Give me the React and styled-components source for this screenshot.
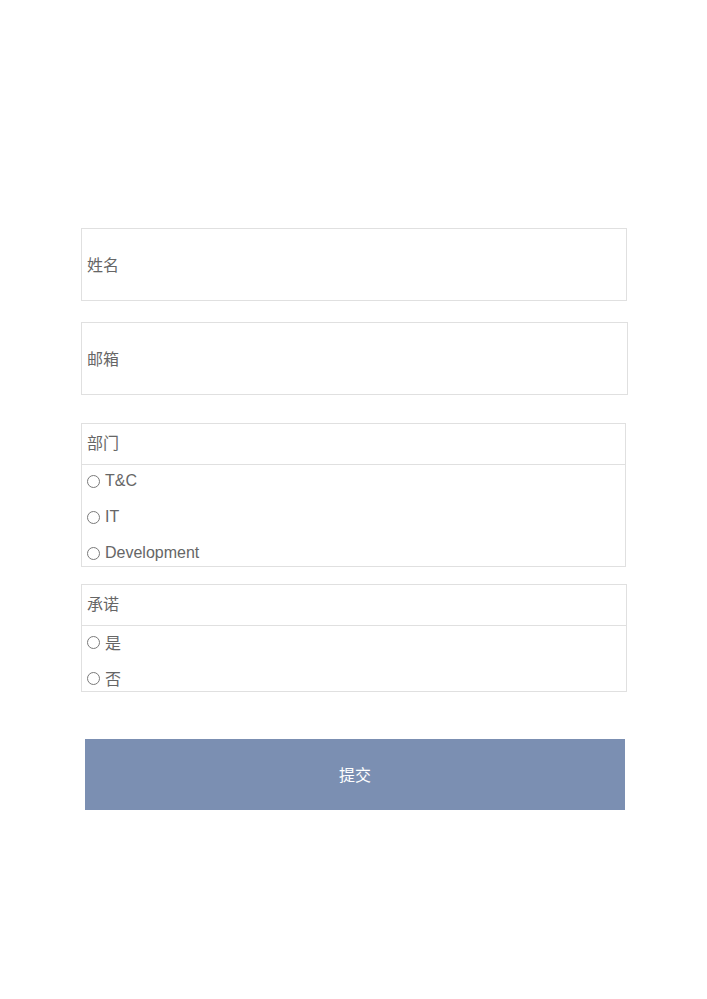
import React, { useState } from 'react';
import styled, { createGlobalStyle } from 'styled-components';

const GlobalStyle = createGlobalStyle`
  body {
    margin: 0;
    background: #fff;
    font-family: "Liberation Sans", "Noto Sans CJK SC", sans-serif;
  }
`;

const Form = styled.form`
  display: flex;
  flex-direction: column;
  padding: 228px 0 0 81px;
  width: 547px;
`;

const Field = styled.div`
  box-sizing: border-box;
  width: ${p => p.$width}px;
  height: 73px;
  border: 1px solid #e0e0e0;
  display: flex;
  align-items: center;
  padding: 0 0 1px 5px;
  margin-bottom: ${p => p.$gap}px;
  font-size: 16px;
  color: #666;
`;

const Group = styled.div`
  box-sizing: border-box;
  width: ${p => p.$width}px;
  border: 1px solid #e0e0e0;
  margin-bottom: ${p => p.$gap}px;
  color: #666;
  font-size: 16px;
`;

const GroupTitle = styled.div`
  height: 36px;
  display: flex;
  align-items: center;
  padding: 0 0 4px 5px;
  border-bottom: 1px solid #e0e0e0;
`;

const Options = styled.div`
  display: flex;
  flex-direction: column;
  gap: 16px;
  padding: 6px 0 3px 5px;
`;

const Option = styled.label`
  height: 20px;
  display: flex;
  align-items: center;
  gap: 5px;
  cursor: pointer;
`;

const Radio = styled.input`
  appearance: none;
  margin: 0;
  width: 13px;
  height: 13px;
  border: 1px solid #7a7a7a;
  border-radius: 50%;
  box-sizing: border-box;
  background: #fff;
  &:checked {
    background: radial-gradient(circle, #555 0 3px, #fff 3.5px);
  }
`;

const SubmitButton = styled.button`
  margin: 0 0 0 4px;
  width: 540px;
  height: 71px;
  padding: 0 0 2px;
  border: none;
  background-color: #7b8fb2;
  color: #fff;
  font-size: 16px;
  font-family: inherit;
  cursor: pointer;
`;

function RadioGroup({ title, name, options, width, gap }) {
  const [value, setValue] = useState('');
  return (
    <Group $width={width} $gap={gap}>
      <GroupTitle>{title}</GroupTitle>
      <Options>
        {options.map(o => (
          <Option key={o}>
            <Radio
              type="radio"
              name={name}
              checked={value === o}
              onChange={() => setValue(o)}
            />
            {o}
          </Option>
        ))}
      </Options>
    </Group>
  );
}

export default function App() {
  return (
    <>
      <GlobalStyle />
      <Form onSubmit={e => e.preventDefault()}>
        <Field $width={546} $gap={21}>姓名</Field>
        <Field $width={547} $gap={28}>邮箱</Field>
        <RadioGroup
          title="部门"
          name="dept"
          options={['T&C', 'IT', 'Development']}
          width={545}
          gap={17}
        />
        <RadioGroup
          title="承诺"
          name="promise"
          options={['是', '否']}
          width={546}
          gap={47}
        />
        <SubmitButton type="submit">提交</SubmitButton>
      </Form>
    </>
  );
}
